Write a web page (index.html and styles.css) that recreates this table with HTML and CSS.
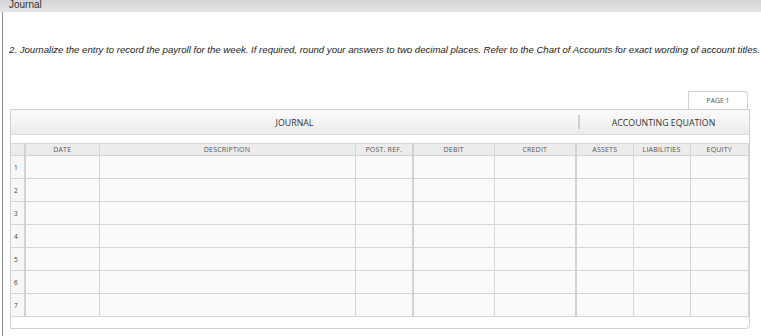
FILE: index.html
```html
<!DOCTYPE html>
<html lang="en">
<head>
    <meta charset="UTF-8">
    <title>Journal</title>
    <link rel="stylesheet" href="styles.css">
</head>
<body>
    <div class="topbar">Journal</div>
    <div class="frame">
        <p class="instructions">2. Journalize the entry to record the payroll for the week. If required, round your answers to two decimal places. Refer to the Chart of Accounts for exact wording of account titles.</p>

        <div class="tabs">
            <div class="tab">PAGE 1</div>
        </div>
        <div class="panel">
            <div class="band">
                <div class="band-title journal">JOURNAL</div>
                <div class="band-title equation">ACCOUNTING EQUATION</div>
            </div>
            <table class="grid">
                <colgroup>
                    <col class="c-num"><col class="c-date"><col class="c-desc"><col class="c-ref">
                    <col class="c-debit"><col class="c-credit"><col class="c-assets"><col class="c-liab"><col class="c-equity">
                </colgroup>
                <thead>
                    <tr>
                        <th class="num"></th>
                        <th>DATE</th>
                        <th>DESCRIPTION</th>
                        <th>POST. REF.</th>
                        <th class="split">DEBIT</th>
                        <th>CREDIT</th>
                        <th class="split">ASSETS</th>
                        <th>LIABILITIES</th>
                        <th class="last">EQUITY</th>
                    </tr>
                </thead>
                <tbody>
                    <tr><td class="num">1</td><td></td><td></td><td></td><td class="split"></td><td></td><td class="split"></td><td></td><td class="last"></td></tr>
                    <tr><td class="num">2</td><td></td><td></td><td></td><td class="split"></td><td></td><td class="split"></td><td></td><td class="last"></td></tr>
                    <tr><td class="num">3</td><td></td><td></td><td></td><td class="split"></td><td></td><td class="split"></td><td></td><td class="last"></td></tr>
                    <tr><td class="num">4</td><td></td><td></td><td></td><td class="split"></td><td></td><td class="split"></td><td></td><td class="last"></td></tr>
                    <tr><td class="num">5</td><td></td><td></td><td></td><td class="split"></td><td></td><td class="split"></td><td></td><td class="last"></td></tr>
                    <tr><td class="num">6</td><td></td><td></td><td></td><td class="split"></td><td></td><td class="split"></td><td></td><td class="last"></td></tr>
                    <tr><td class="num">7</td><td></td><td></td><td></td><td class="split"></td><td></td><td class="split"></td><td></td><td class="last"></td></tr>
                </tbody>
            </table>
            <div class="panel-foot"></div>
        </div>
    </div>
</body>
</html>
```

FILE: styles.css
```css
* {
    margin: 0;
    padding: 0;
    box-sizing: border-box;
}

body {
    background: #ffffff;
    font-family: 'Liberation Sans', Arial, sans-serif;
    color: #222;
    width: 761px;
    height: 336px;
    overflow: hidden;
}

.topbar {
    height: 12px;
    background: linear-gradient(to bottom, #d4d4d4 0%, #e6e6e6 100%);
    font-size: 10px;
    line-height: 9px;
    padding-left: 9px;
    color: #333;
    overflow: hidden;
}

.frame {
    margin-left: 2px;
    border-left: 1px solid #8a8a8a;
    height: 324px;
}

.instructions {
    font-style: italic;
    font-size: 9.6px;
    color: #222;
    padding: 32px 0 0 6px;
    white-space: nowrap;
    line-height: 12px;
}

.tabs {
    display: flex;
    justify-content: flex-end;
    margin-top: 35px;
    width: 746px;
}

.tab {
    width: 60px;
    height: 18px;
    border: 1px solid #d0d0d0;
    border-bottom: none;
    border-radius: 0 4px 0 0;
    background: #ffffff;
    font-family: 'Open Sans', sans-serif;
    font-size: 6.8px;
    color: #555;
    text-align: center;
    line-height: 17px;
    margin-right: 1px;
}

.panel {
    margin-left: 7px;
    width: 740px;
    border: 1px solid #d0d0d0;
    border-radius: 0 0 4px 0;
    font-family: 'Open Sans', sans-serif;
}

.band {
    display: flex;
    height: 25px;
    background: linear-gradient(to bottom, #fbfbfb 0%, #ececec 100%);
    border-bottom: 1px solid #dcdcdc;
}

.band-title {
    font-size: 8.8px;
    color: #333;
    display: flex;
    align-items: center;
    justify-content: center;
    padding-top: 2px;
}

.band-title.journal {
    width: 567px;
}

.band-title.equation {
    flex: 1;
    position: relative;
}

/* short divider between the two headings */
.band-title.equation::before {
    content: "";
    position: absolute;
    left: 0;
    top: 5px;
    bottom: 5px;
    border-left: 2px solid #cfcfcf;
}

.grid {
    border-collapse: collapse;
    table-layout: fixed;
    width: 738px;
    margin-top: 8px;
}

.c-num { width: 14px; }
.c-date { width: 74px; }
.c-desc { width: 256px; }
.c-ref { width: 58px; }
.c-debit { width: 81px; }
.c-credit { width: 82px; }
.c-assets { width: 57px; }
.c-liab { width: 57px; }
.c-equity { width: 59px; }

.grid th {
    height: 12px;
    background: #ececec;
    border: 1px solid #d6d6d6;
    font-weight: normal;
    font-size: 7px;
    letter-spacing: 0.2px;
    color: #555;
    text-align: center;
    line-height: 10px;
    padding: 0;
}

.grid td {
    height: 23px;
    background: #fafafa;
    border: 1px solid #d6d6d6;
    padding: 0;
}

.grid .num {
    border-left: none;
    border-right: 2px solid #d2d2d2;
    background: #f7f7f7;
    font-size: 6.5px;
    color: #444;
    padding-left: 3px;
    text-align: left;
}

.grid th.num {
    background: #ececec;
}

.grid .split {
    border-left: 2px solid #d2d2d2;
}

.grid .last {
    border-right: 2px solid #d2d2d2;
}

.panel-foot {
    height: 11px;
}
```
